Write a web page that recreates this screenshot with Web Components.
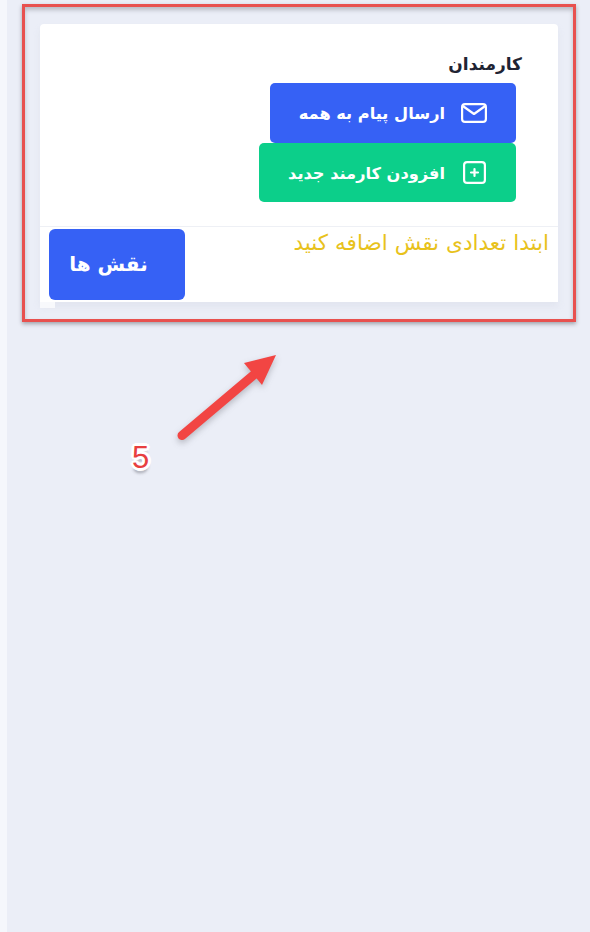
<!DOCTYPE html>
<html lang="fa" dir="rtl">
<head>
<meta charset="utf-8">
<style>
html,body{margin:0;padding:0;width:590px;height:932px;overflow:hidden;background:#ebeef7}
body{font-family:"DejaVu Sans","Noto Sans",sans-serif}
</style>
</head>
<body>
<app-page>
  <staff-card>
    <span slot="title">کارمندان</span>
    <action-button slot="actions" color="#3661f5" width="246" icon="mail">ارسال پیام به همه</action-button>
    <action-button slot="actions" color="#0ccf8a" width="257" icon="plus">افزودن کارمند جدید</action-button>
    <span slot="notice">ابتدا تعدادی نقش اضافه کنید</span>
    <role-button slot="role">نقش ها</role-button>
  </staff-card>
  <step-annotation></step-annotation>
</app-page>
<script>
function def(name, css, html, init){
  customElements.define(name, class extends HTMLElement{
    constructor(){super();this.attachShadow({mode:'open'}).innerHTML='<style>'+css+'</style>'+html;}
    connectedCallback(){ if(init) init(this); }
  });
}
def('app-page',
 `:host{display:block;position:relative;width:590px;height:932px;box-sizing:border-box;padding:24px 32px 0 40px;background:linear-gradient(to right,#f5f7fc 0,#f5f7fc 7px,#ebeef7 7px)}`,
 `<slot></slot>`);
def('staff-card',
 `:host{display:block;position:relative;width:518px;height:278px;box-sizing:border-box;background:#fff;border-radius:4px 4px 0 0;box-shadow:0 5px 6px rgba(205,210,222,.3);direction:rtl}
  .top{display:flex;flex-direction:column;align-items:flex-start;padding:30px 36px 0 0;height:203px;box-sizing:border-box;border-bottom:1px solid #eef0f5}
  .title{font-size:17px;font-weight:700;color:#1f2433;line-height:20px;height:29px}
  .actions{display:flex;flex-direction:column;align-items:flex-start;margin-right:6px}
  .bottom{display:flex;justify-content:space-between;align-items:flex-start;padding:0 9px;height:75px;box-sizing:border-box}
  .notice{font-size:21.6px;color:#e8c21c;line-height:32px}
  .role{margin-top:2px}
  .sliver{position:absolute;left:0;bottom:-6px;width:15px;height:6px;background:#f8f9fc}`,
 `<div class="top"><div class="title"><slot name="title"></slot></div><div class="actions"><slot name="actions"></slot></div></div>
  <div class="bottom"><div class="notice"><slot name="notice"></slot></div><div class="role"><slot name="role"></slot></div></div><div class="sliver"></div>`);
const icons={
 mail:`<svg width="26" height="20" viewBox="0 0 26 20" fill="none" stroke="#fff" stroke-width="2.2" stroke-linejoin="round" stroke-linecap="round"><rect x="1.1" y="1.1" width="23.8" height="17.8" rx="3"/><path d="M2.5 3.5L13 11 23.5 3.5"/></svg>`,
 plus:`<svg width="23" height="23" viewBox="0 0 23 23" fill="none" stroke="#fff" stroke-width="2.2" stroke-linecap="round"><rect x="1.1" y="1.1" width="20.8" height="20.8" rx="3"/><path d="M11.5 8v7M8 11.5h7"/></svg>`
};
def('action-button',
 `:host{display:flex;align-items:center;box-sizing:border-box;height:59.5px;border-radius:5px;padding:0 29px 0 0;gap:16px;color:#fff;font-size:16.2px;font-weight:700;background:var(--c);width:var(--w)}
  .i{display:flex;width:26px;justify-content:center}
  .t{padding-top:2px}`,
 `<span class="i"></span><span class="t"><slot></slot></span>`,
 el=>{el.style.setProperty('--c',el.getAttribute('color'));el.style.setProperty('--w',el.getAttribute('width')+'px');
      el.shadowRoot.querySelector('.i').innerHTML=icons[el.getAttribute('icon')];});
def('role-button',
 `:host{display:flex;align-items:center;justify-content:center;box-sizing:border-box;width:136px;height:71px;border-radius:6px;background:#3661f5;color:#fff;font-size:20px;font-weight:700;padding:0 17px 2px 0}`,
 `<slot></slot>`);
def('step-annotation',
 `:host{display:block}
  .frame{position:absolute;left:22px;top:4px;width:554px;height:318px;box-sizing:border-box;border:3px solid #e8514f;box-shadow:0 2px 4px rgba(70,70,80,.45),inset 0 3px 4px rgba(70,70,80,.3)}
  svg{position:absolute;left:170px;top:350px;overflow:visible;filter:drop-shadow(0 3px 3px rgba(60,60,70,.3))}
  .n{position:absolute;left:130px;top:441px;width:21px;text-align:center;font:31px/34px "Liberation Sans",sans-serif;color:#e83f3f;direction:ltr;text-shadow:-3px 0 #fff,3px 0 #fff,0 -3px #fff,0 3px #fff,-2px -2px #fff,2px -2px #fff,-2px 2px #fff,2px 2px #fff,0 5px 3px rgba(60,60,70,.45)}`,
 `<div class="frame"></div>
  <svg width="110" height="92" viewBox="170 350 110 92"><path d="M182 435.5L256 373" stroke="#f24543" stroke-width="9" stroke-linecap="round" fill="none"/><path d="M276 355L244 363 262 385Z" fill="#f24543"/></svg>
  <div class="n">5</div>`);
</script>
</body>
</html>
